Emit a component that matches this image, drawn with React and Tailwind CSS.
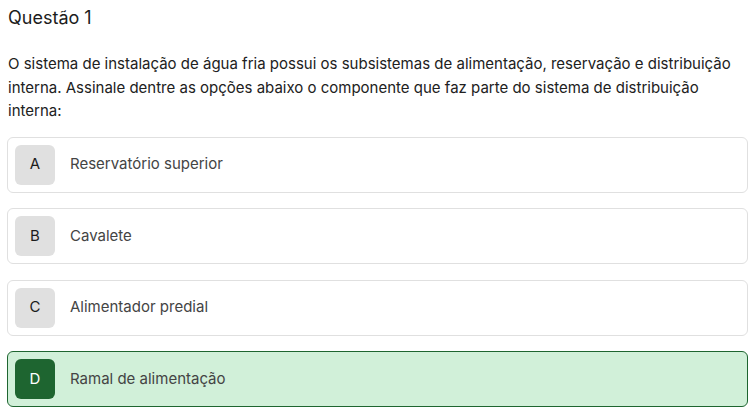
import React from 'react'

const options = [
  { letter: 'A', text: 'Reservatório superior' },
  { letter: 'B', text: 'Cavalete' },
  { letter: 'C', text: 'Alimentador predial' },
  { letter: 'D', text: 'Ramal de alimentação', selected: true },
]

export default function App() {
  return (
    <div className="bg-white px-[7px] pt-[6px] font-['Inter',sans-serif] text-[#1c1c1c]">
      <h1 className="text-[18px] leading-[24px] px-px">Questão 1</h1>
      <p className="mt-[22px] text-[15px] leading-[23.5px] text-[#212121] px-px">
        O sistema de instalação de água fria possui os subsistemas de alimentação, reservação e distribuição
        interna. Assinale dentre as opções abaixo o componente que faz parte do sistema de distribuição
        interna:
      </p>
      <div className="mt-[14px] flex flex-col gap-[15.5px]">
        {options.map(o => (
          <div
            key={o.letter}
            className={
              o.selected
                ? 'flex items-center gap-[15px] rounded-[6px] border border-[#1e6530] bg-[#d1f0d9] p-[7px]'
                : 'flex items-center gap-[15px] rounded-[6px] border border-[#e0e0e0] bg-white p-[7px]'
            }
          >
            <div
              className={
                o.selected
                  ? 'flex h-10 w-10 items-center justify-center rounded-[6px] bg-[#1e6530] text-[15px] text-white'
                  : 'flex h-10 w-10 items-center justify-center rounded-[6px] bg-[#e0e0e0] text-[15px] text-[#1c1c1c]'
              }
            >
              {o.letter}
            </div>
            <span className="text-[15px] text-[#444]">{o.text}</span>
          </div>
        ))}
      </div>
    </div>
  )
}
